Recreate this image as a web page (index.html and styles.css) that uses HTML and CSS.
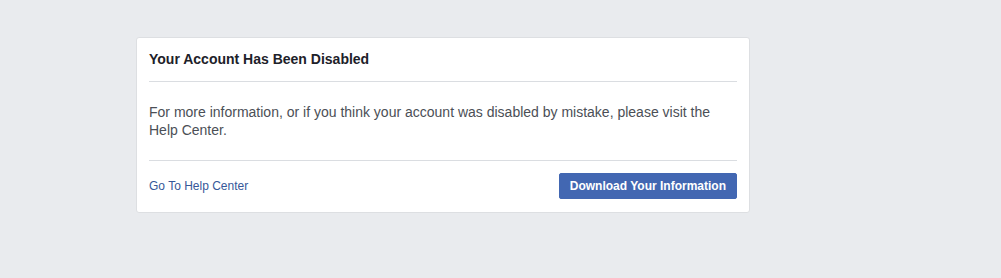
FILE: index.html
```html
<!DOCTYPE html>
<html lang="en">
<head>
    <meta charset="UTF-8">
    <title>Your Account Has Been Disabled</title>
    <link rel="stylesheet" href="styles.css">
</head>
<body>
    <div class="page">
        <div class="card">
            <div class="card-header">Your Account Has Been Disabled</div>
            <div class="card-body">
                For more information, or if you think your account was disabled by mistake, please visit the Help Center.
            </div>
            <div class="card-footer">
                <a class="help-link" href="#">Go To Help Center</a>
                <button class="download-btn" type="button">Download Your Information</button>
            </div>
        </div>
    </div>
</body>
</html>
```

FILE: styles.css
```css
body {
    margin: 0;
    background-color: #e9ebee;
    font-family: "Liberation Sans", Arial, sans-serif;
}
.page {
    padding: 37px 0 0 136px;
}
.card {
    box-sizing: border-box;
    width: 614px;
    background: white;
    border: 1px solid #dddfe2;
    border-radius: 3px;
    padding: 0 12px;
}
.card-header {
    padding: 12px 0 13px;
    font-size: 14px;
    line-height: 18px;
    font-weight: bold;
    color: #1d2129;
    border-bottom: 1px solid #dadde1;
}
.card-body {
    padding: 21px 0 21px;
    font-size: 14px;
    line-height: 18px;
    color: #4b4f56;
    border-bottom: 1px solid #dadde1;
}
.card-footer {
    display: flex;
    justify-content: space-between;
    align-items: center;
    padding: 12px 0 13px;
}
.help-link {
    font-size: 12px;
    color: #365899;
    text-decoration: none;
}
.download-btn {
    height: 26px;
    padding: 0 10px;
    background-color: #4267b2;
    border: 1px solid #4267b2;
    border-radius: 2px;
    color: white;
    font-family: inherit;
    font-size: 12px;
    font-weight: bold;
    cursor: pointer;
}
```
